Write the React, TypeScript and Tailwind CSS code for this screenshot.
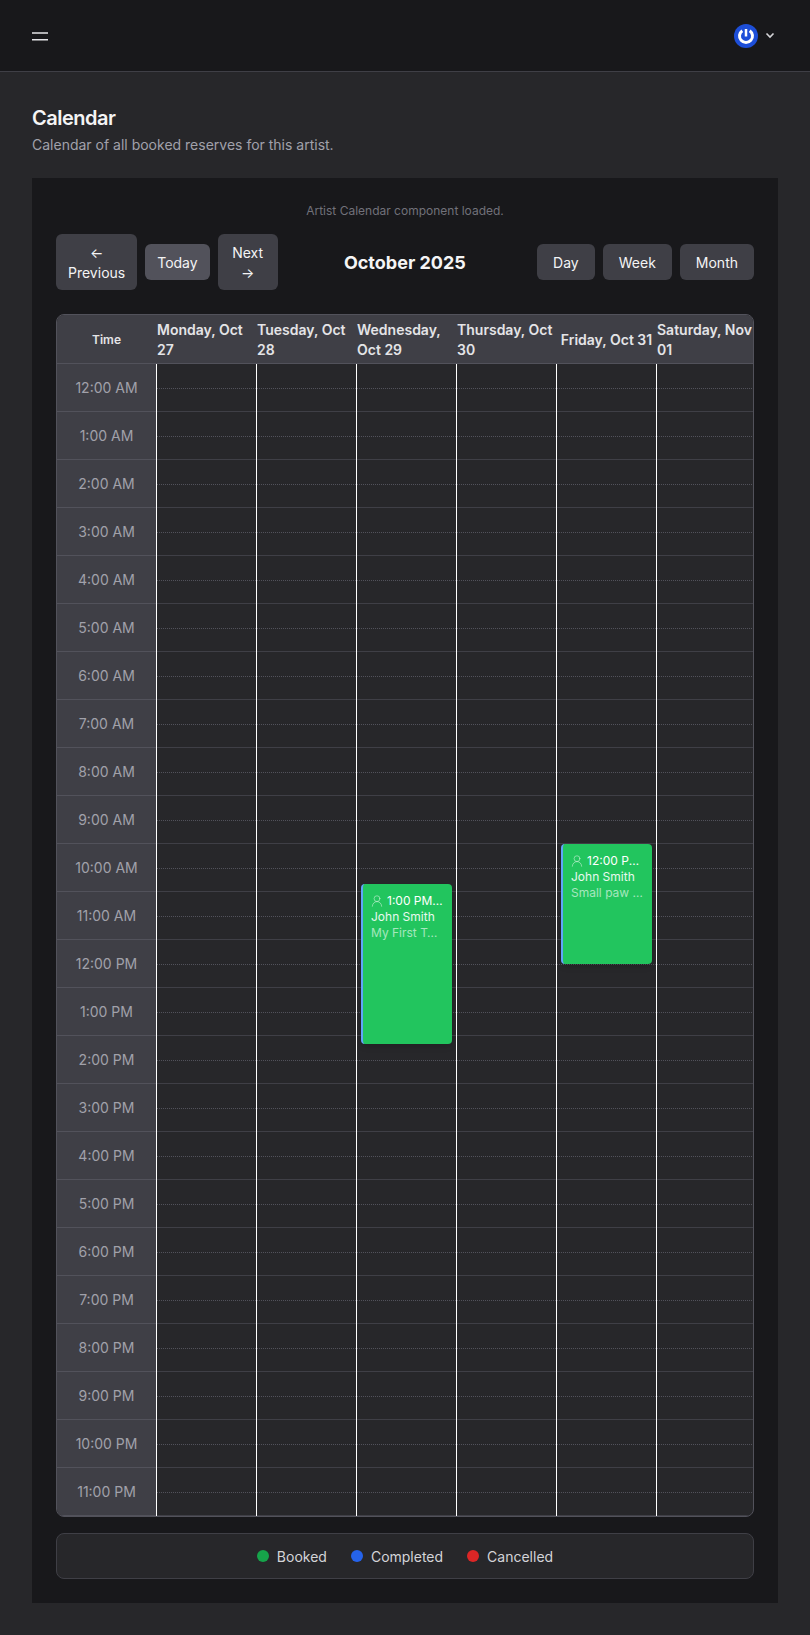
import { UserRound } from 'lucide-react';

const days = ['Monday, Oct 27', 'Tuesday, Oct 28', 'Wednesday, Oct 29', 'Thursday, Oct 30', 'Friday, Oct 31', 'Saturday, Nov 01'];

const hours = [
  '12:00 AM', '1:00 AM', '2:00 AM', '3:00 AM', '4:00 AM', '5:00 AM', '6:00 AM', '7:00 AM',
  '8:00 AM', '9:00 AM', '10:00 AM', '11:00 AM', '12:00 PM', '1:00 PM', '2:00 PM', '3:00 PM',
  '4:00 PM', '5:00 PM', '6:00 PM', '7:00 PM', '8:00 PM', '9:00 PM', '10:00 PM', '11:00 PM',
];

function ToolButton({ children, active, className }: { children: React.ReactNode; active?: boolean; className?: string }) {
  return (
    <button className={`rounded-md pt-[9px] pb-[7px] text-sm text-[#f4f4f5] text-center ${active ? 'bg-[#52525b]' : 'bg-[#3f3f46]'} ${className ?? 'px-3'}`}>
      {children}
    </button>
  );
}

function EventCard({ time, note, top, height }: { time: string; note: string; top: string; height: string }) {
  return (
    <div className={`absolute left-1 right-1 z-10 rounded border-l-2 border-[#60a5fa] bg-[#22c55e] px-2 pt-[9px] pb-2 text-xs leading-4 text-white shadow-md ${top} ${height}`}>
      <div className="flex items-center gap-[3px]">
        <UserRound strokeWidth={1.5} className="w-3.5 h-3.5 -ml-px shrink-0 text-white/50" />
        <span className="truncate">{time}</span>
      </div>
      <div className="truncate text-white/90">John Smith</div>
      <div className="truncate text-white/60">{note}</div>
    </div>
  );
}

export default function App() {
  return (
    <div className="min-h-[1635px] bg-[#27272a] font-[Inter,'Noto_Sans',sans-serif]">
      {/* Top bar */}
      <header className="h-[72px] bg-[#18181b] border-b border-[#3f3f46] flex items-center justify-between pl-7 pr-9">
        <button className="text-[#e4e4e7]">
          <svg viewBox="0 0 24 24" fill="none" stroke="currentColor" strokeWidth={1.5} className="w-6 h-6">
            <path d="M4 9h16M4 15.75h16" />
          </svg>
        </button>
        <div className="flex items-center gap-2">
          <svg viewBox="0 0 24 24" className="w-6 h-6">
            <circle cx="12" cy="12" r="12" fill="#1d4ed8" />
            <path d="M8.3 6.7a6.5 6.5 0 1 0 7.4 0" fill="none" stroke="#fff" strokeWidth="3" />
            <path d="M12 5v7.5" fill="none" stroke="#fff" strokeWidth="2.5" />
          </svg>
          <svg viewBox="0 0 8 5" fill="none" stroke="#d4d4d8" strokeWidth={1.6} className="w-2 h-[5px] overflow-visible">
            <path d="M0.5 0.5 4 4 7.5 0.5" />
          </svg>
        </div>
      </header>

      <main className="px-8 pt-8 pb-8">
        <h1 className="text-xl leading-7 tracking-tight font-semibold text-[#f4f4f5]">Calendar</h1>
        <p className="mt-[3px] mb-[23px] text-sm text-[#a1a1aa]">Calendar of all booked reserves for this artist.</p>

        <section className="bg-[#18181b] p-6">
          <p className="mt-px mb-[15px] text-xs text-center text-[#71717a]">Artist Calendar component loaded.</p>

          {/* Toolbar */}
          <div className="mb-6 flex items-center justify-between">
            <div className="flex items-center gap-2">
              <ToolButton>←<br />Previous</ToolButton>
              <ToolButton active>Today</ToolButton>
              <ToolButton className="w-[60px]">Next<br />→</ToolButton>
            </div>
            <h2 className="pt-px mr-[5px] text-lg font-bold text-[#f4f4f5]">October 2025</h2>
            <div className="flex items-center gap-2">
              <ToolButton className="px-4">Day</ToolButton>
              <ToolButton className="px-4">Week</ToolButton>
              <ToolButton className="px-4">Month</ToolButton>
            </div>
          </div>

          {/* Week grid */}
          <div className="rounded-lg border border-[#52525b] overflow-hidden bg-[#27272a]">
            <div className="flex h-[49px] bg-[#3f3f46] border-b border-[#52525b]">
              <div className="w-[99px] shrink-0 pt-px flex items-center justify-center text-xs font-semibold text-[#e4e4e7]">Time</div>
              {days.map((d) => (
                <div key={d} className="w-[100px] shrink-0 pl-px pt-px flex items-center justify-center text-sm font-semibold text-[#e4e4e7]">
                  <span>{d}</span>
                </div>
              ))}
            </div>

            <div className="flex">
              <div className="w-[99px] shrink-0 bg-[#3f3f46]">
                {hours.map((h) => (
                  <div key={h} className="h-12 border-b border-[#52525b] flex items-center justify-center text-sm text-[#a1a1aa]">{h}</div>
                ))}
              </div>
              {days.map((d, i) => (
                <div key={d} className="relative w-[100px] shrink-0 border-l border-white">
                  {hours.map((h) => (
                    <div key={h} className="h-12 border-b border-[#3f3f46]">
                      <div className="h-[25px] border-b border-dotted border-[#52525b]" />
                    </div>
                  ))}
                  {i === 2 && <EventCard time="1:00 PM - 5:00 PM" note="My First Tattoo" top="top-[520px]" height="h-[160px]" />}
                  {i === 4 && <EventCard time="12:00 PM - 3:00 PM" note="Small paw print" top="top-[480px]" height="h-[120px]" />}
                </div>
              ))}
            </div>
          </div>

          {/* Legend */}
          <div className="mt-4 rounded-lg border border-[#3f3f46] bg-[#27272a] pt-[13px] pb-[11px] flex items-center justify-center gap-6 text-sm text-[#d4d4d8]">
            <div className="flex items-center gap-2"><span className="w-3 h-3 -mt-0.5 rounded-full bg-[#16a34a]" />Booked</div>
            <div className="flex items-center gap-2"><span className="w-3 h-3 -mt-0.5 rounded-full bg-[#2563eb]" />Completed</div>
            <div className="flex items-center gap-2"><span className="w-3 h-3 -mt-0.5 rounded-full bg-[#dc2626]" />Cancelled</div>
          </div>
        </section>
      </main>
    </div>
  );
}
